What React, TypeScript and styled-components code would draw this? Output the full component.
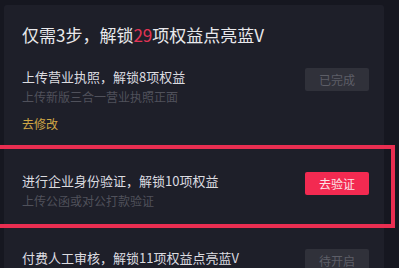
import React from "react";
import styled, { createGlobalStyle } from "styled-components";

const Global = createGlobalStyle`
  html, body { margin: 0; padding: 0; background: #161720; overflow: hidden; }
  body { font-family: "Noto Sans CJK SC", "Noto Sans", sans-serif; }
`;

const Page = styled.div`
  width: 399px;
  height: 268px;
  background: #161720;
  padding: 5px 15px 0 4px;
  box-sizing: border-box;
  overflow: hidden;
`;

const Card = styled.div`
  background: #1e1f29;
  border-radius: 3px 3px 0 0;
  padding: 19px 15px 0 18px;
  height: 300px;
  box-sizing: border-box;
`;

const Title = styled.div`
  font-size: 17px;
  line-height: 22px;
  color: #e9e9ec;
  letter-spacing: 0;
`;

const Hl = styled.span`
  color: #e23455;
`;

const Row = styled.div<{ $highlight?: boolean }>`
  position: relative;
  display: flex;
  justify-content: space-between;
  align-items: flex-start;
  padding: 21px 0 17px;
  ${(p) =>
    p.$highlight &&
    `
    &::after {
      content: "";
      position: absolute;
      left: -40px;
      right: -26px;
      top: -5px;
      bottom: -1px;
      border: 4px solid #ea2e51;
      pointer-events: none;
    }
  `}
`;

const Info = styled.div`
  display: flex;
  flex-direction: column;
`;

const RowTitle = styled.div`
  font-size: 13px;
  line-height: 20px;
  color: #dcdce0;
`;

const RowSub = styled.div`
  font-size: 12px;
  line-height: 18px;
  color: #50515b;
  margin-top: 1px;
`;

const EditLink = styled.div`
  font-size: 12px;
  line-height: 18px;
  color: #cfa645;
  margin-top: 9px;
`;

const Button = styled.div<{ $variant: "done" | "primary" | "wait" }>`
  width: 64px;
  height: 23px;
  margin-top: 1px;
  border-radius: 2px;
  display: flex;
  align-items: center;
  justify-content: center;
  font-size: 12px;
  flex-shrink: 0;
  background: ${(p) => (p.$variant === "primary" ? "#f32a51" : "#30313a")};
  color: ${(p) => (p.$variant === "primary" ? "#fbe3e8" : "#5d5e67")};
`;

export default function App() {
  return (
    <>
      <Global />
      <Page>
        <Card>
          <Title>
            仅需3步，解锁<Hl>29</Hl>项权益点亮蓝V
          </Title>
          <Row>
            <Info>
              <RowTitle>上传营业执照，解锁8项权益</RowTitle>
              <RowSub>上传新版三合一营业执照正面</RowSub>
              <EditLink>去修改</EditLink>
            </Info>
            <Button $variant="done">已完成</Button>
          </Row>
          <Row $highlight>
            <Info>
              <RowTitle>进行企业身份验证，解锁10项权益</RowTitle>
              <RowSub>上传公函或对公打款验证</RowSub>
            </Info>
            <Button $variant="primary">去验证</Button>
          </Row>
          <Row>
            <Info>
              <RowTitle>付费人工审核，解锁11项权益点亮蓝V</RowTitle>
            </Info>
            <Button $variant="wait">待开启</Button>
          </Row>
        </Card>
      </Page>
    </>
  );
}
